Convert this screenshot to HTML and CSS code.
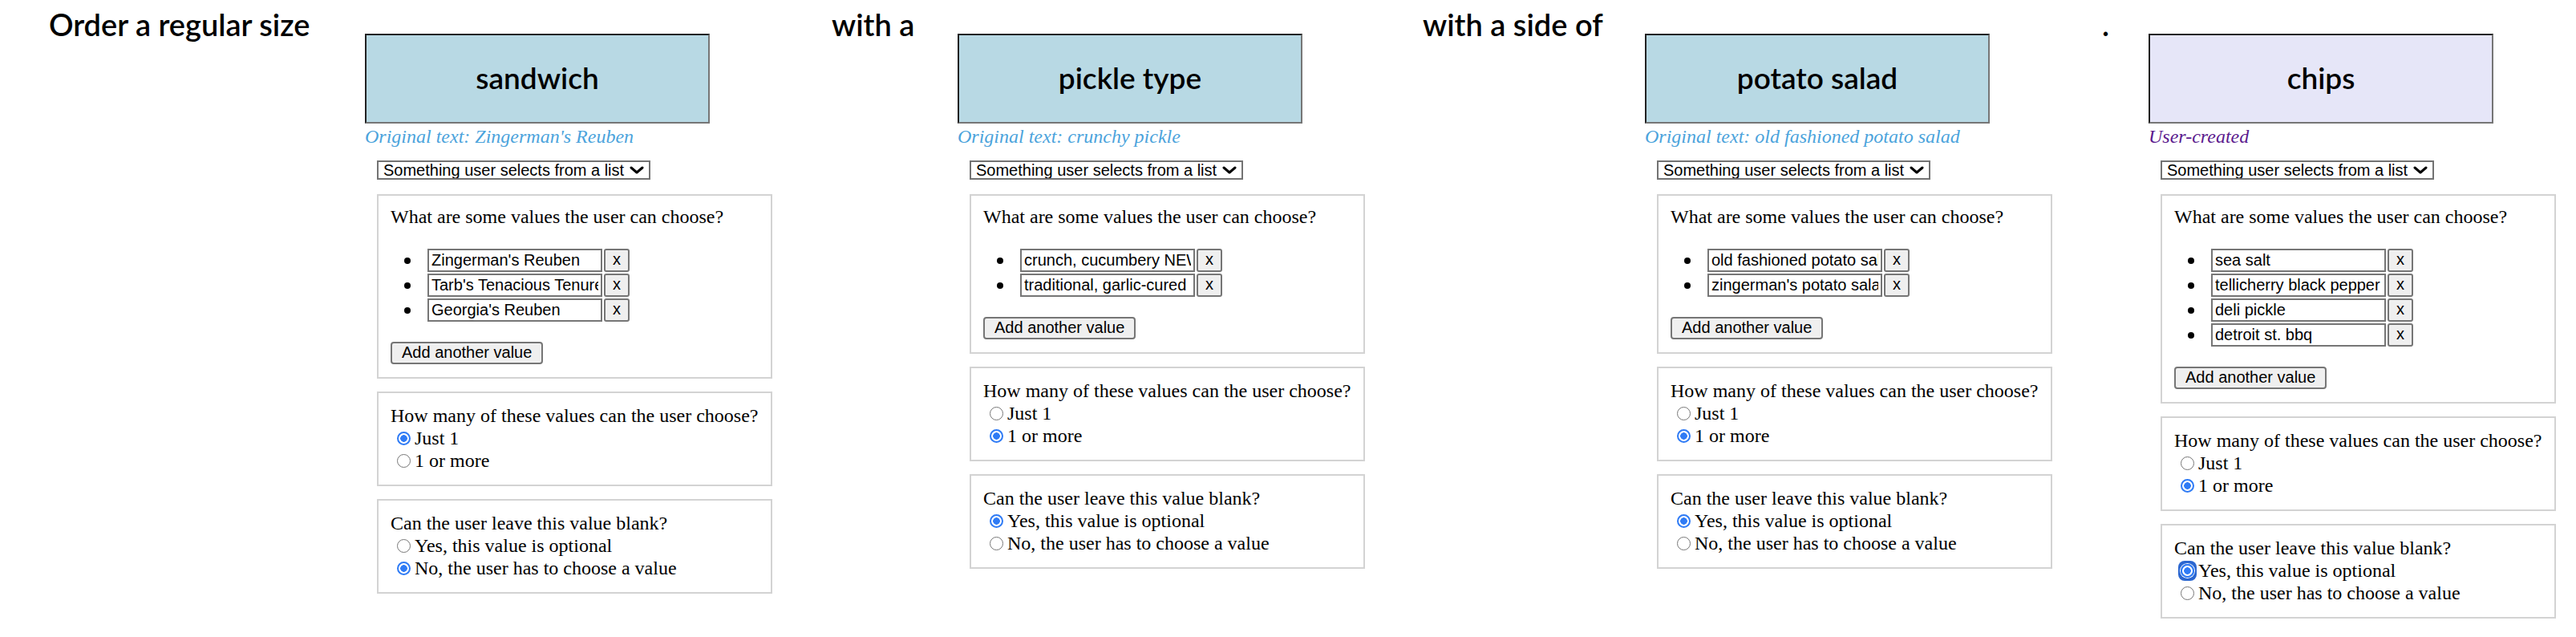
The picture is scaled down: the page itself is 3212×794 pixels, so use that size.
FILE: index.html
```html
<!DOCTYPE html>
<html lang="en">
<head>
<meta charset="utf-8">
<title>Order template</title>
<link rel="stylesheet" href="styles.css">
</head>
<body>
<main class="sentence">
  <div class="phrase">Order a regular size</div>

  <section class="slot">
    <div class="chip chip-original">sandwich</div>
    <div class="origin">Original text: Zingerman's Reuben</div>
    <div class="settings">
      <div class="select-wrap">
        <select class="type-select"><option>Something user selects from a list</option></select>
        <svg class="chev" width="18" height="10" viewBox="0 0 18 10"><polyline points="2,2 9,8 16,2" fill="none" stroke="#000" stroke-width="3" stroke-linecap="round" stroke-linejoin="round"/></svg>
      </div>
      <div class="panel panel-values">
        <p class="q">What are some values the user can choose?</p>
        <ul class="value-list">
          <li><input class="value-input" value="Zingerman's Reuben"><button class="remove">x</button></li>
          <li><input class="value-input" value="Tarb's Tenacious Tenure"><button class="remove">x</button></li>
          <li><input class="value-input" value="Georgia's Reuben"><button class="remove">x</button></li>
        </ul>
        <button class="add">Add another value</button>
      </div>
      <div class="panel">
        <p class="q">How many of these values can the user choose?</p>
        <label class="opt"><input type="radio" name="n1" checked>Just 1</label>
        <label class="opt"><input type="radio" name="n1">1 or more</label>
      </div>
      <div class="panel">
        <p class="q">Can the user leave this value blank?</p>
        <label class="opt"><input type="radio" name="b1">Yes, this value is optional</label>
        <label class="opt"><input type="radio" name="b1" checked>No, the user has to choose a value</label>
      </div>
    </div>
  </section>

  <div class="phrase">with a</div>

  <section class="slot">
    <div class="chip chip-original">pickle type</div>
    <div class="origin">Original text: crunchy pickle</div>
    <div class="settings">
      <div class="select-wrap">
        <select class="type-select"><option>Something user selects from a list</option></select>
        <svg class="chev" width="18" height="10" viewBox="0 0 18 10"><polyline points="2,2 9,8 16,2" fill="none" stroke="#000" stroke-width="3" stroke-linecap="round" stroke-linejoin="round"/></svg>
      </div>
      <div class="panel panel-values">
        <p class="q">What are some values the user can choose?</p>
        <ul class="value-list">
          <li><input class="value-input" value="crunch, cucumbery NEW YORK style"><button class="remove">x</button></li>
          <li><input class="value-input" value="traditional, garlic-cured"><button class="remove">x</button></li>
        </ul>
        <button class="add">Add another value</button>
      </div>
      <div class="panel">
        <p class="q">How many of these values can the user choose?</p>
        <label class="opt"><input type="radio" name="n2">Just 1</label>
        <label class="opt"><input type="radio" name="n2" checked>1 or more</label>
      </div>
      <div class="panel">
        <p class="q">Can the user leave this value blank?</p>
        <label class="opt"><input type="radio" name="b2" checked>Yes, this value is optional</label>
        <label class="opt"><input type="radio" name="b2">No, the user has to choose a value</label>
      </div>
    </div>
  </section>

  <div class="phrase">with a side of</div>

  <section class="slot">
    <div class="chip chip-original">potato salad</div>
    <div class="origin">Original text: old fashioned potato salad</div>
    <div class="settings">
      <div class="select-wrap">
        <select class="type-select"><option>Something user selects from a list</option></select>
        <svg class="chev" width="18" height="10" viewBox="0 0 18 10"><polyline points="2,2 9,8 16,2" fill="none" stroke="#000" stroke-width="3" stroke-linecap="round" stroke-linejoin="round"/></svg>
      </div>
      <div class="panel panel-values">
        <p class="q">What are some values the user can choose?</p>
        <ul class="value-list">
          <li><input class="value-input" value="old fashioned potato salad"><button class="remove">x</button></li>
          <li><input class="value-input" value="zingerman's potato salad"><button class="remove">x</button></li>
        </ul>
        <button class="add">Add another value</button>
      </div>
      <div class="panel">
        <p class="q">How many of these values can the user choose?</p>
        <label class="opt"><input type="radio" name="n3">Just 1</label>
        <label class="opt"><input type="radio" name="n3" checked>1 or more</label>
      </div>
      <div class="panel">
        <p class="q">Can the user leave this value blank?</p>
        <label class="opt"><input type="radio" name="b3" checked>Yes, this value is optional</label>
        <label class="opt"><input type="radio" name="b3">No, the user has to choose a value</label>
      </div>
    </div>
  </section>

  <div class="phrase">.</div>

  <section class="slot">
    <div class="chip chip-user">chips</div>
    <div class="origin origin-user">User-created</div>
    <div class="settings">
      <div class="select-wrap">
        <select class="type-select"><option>Something user selects from a list</option></select>
        <svg class="chev" width="18" height="10" viewBox="0 0 18 10"><polyline points="2,2 9,8 16,2" fill="none" stroke="#000" stroke-width="3" stroke-linecap="round" stroke-linejoin="round"/></svg>
      </div>
      <div class="panel panel-values">
        <p class="q">What are some values the user can choose?</p>
        <ul class="value-list">
          <li><input class="value-input" value="sea salt"><button class="remove">x</button></li>
          <li><input class="value-input" value="tellicherry black pepper"><button class="remove">x</button></li>
          <li><input class="value-input" value="deli pickle"><button class="remove">x</button></li>
          <li><input class="value-input" value="detroit st. bbq"><button class="remove">x</button></li>
        </ul>
        <button class="add">Add another value</button>
      </div>
      <div class="panel">
        <p class="q">How many of these values can the user choose?</p>
        <label class="opt"><input type="radio" name="n4">Just 1</label>
        <label class="opt"><input type="radio" name="n4" checked>1 or more</label>
      </div>
      <div class="panel">
        <p class="q">Can the user leave this value blank?</p>
        <label class="opt"><span class="focus-ring"><input type="radio" name="b4" checked></span>Yes, this value is optional</label>
        <label class="opt"><input type="radio" name="b4">No, the user has to choose a value</label>
      </div>
    </div>
  </section>
</main>
</body>
</html>
```

FILE: styles.css
```css
html, body {
  margin: 0;
  padding: 0;
  background: #fff;
}

body {
  font-family: "Liberation Serif", "Times New Roman", serif;
  color: #000;
}

.sentence {
  display: grid;
  grid-template-columns: 394px 582px 157px 580px 277px 570px 58px auto;
  align-items: start;
  padding-left: 61px;
}

.phrase {
  font-family: Lato, "Noto Sans", sans-serif;
  font-weight: 600;
  font-size: 38px;
  line-height: 44px;
  padding-top: 8px;
  white-space: nowrap;
}

.slot {
  padding-top: 42px;
}

.chip {
  width: 430px;
  height: 112px;
  box-sizing: border-box;
  border: 2px solid;
  border-color: #222 #767676 #767676 #222;
  display: flex;
  align-items: center;
  justify-content: center;
  font-family: Lato, "Noto Sans", sans-serif;
  font-weight: 600;
  font-size: 37px;
  padding-bottom: 4px;
}

.chip-original { background: #b8d9e4; }
.chip-user { background: #e6e6f8; }

.origin {
  font-family: "Liberation Serif", serif;
  font-style: italic;
  font-size: 24px;
  line-height: 28px;
  margin-top: 2px;
  color: #4ba3dc;
  white-space: nowrap;
}

.origin-user { color: #5b1a8e; }

.settings {
  display: flex;
  flex-direction: column;
  width: max-content;
  margin-left: 15px;
  margin-top: 16px;
}

.select-wrap {
  position: relative;
  align-self: flex-start;
  display: flex;
}

.type-select {
  appearance: none;
  -webkit-appearance: none;
  width: 341px;
  height: 24px;
  box-sizing: border-box;
  border: 2px solid #737373;
  border-radius: 0;
  background: #fff;
  font-family: "Liberation Sans", Arial, sans-serif;
  font-size: 20px;
  line-height: 20px;
  padding: 0 0 0 6px;
  margin: 0;
  color: #000;
}

.chev {
  position: absolute;
  right: 8px;
  top: 7px;
  pointer-events: none;
}

.panel {
  border: 2px solid #d3d3d3;
  padding: 15px 15px 16px;
  margin-top: 16px;
}

.panel-values {
  margin-top: 18px;
  padding-top: 13px;
}

.q {
  margin: 0;
  font-size: 24px;
  line-height: 27px;
  white-space: nowrap;
}

.value-list {
  list-style: none;
  margin: 26px 0 0;
  padding: 0;
}

.value-list li {
  display: flex;
  align-items: center;
  height: 29px;
  margin-bottom: 2px;
}

.value-list li::before {
  content: "";
  width: 8px;
  height: 8px;
  border-radius: 50%;
  background: #000;
  margin: 0 21px 0 17px;
}

.value-input {
  width: 218px;
  height: 29px;
  box-sizing: border-box;
  border: 2px solid #767676;
  border-radius: 0;
  padding: 0 3px;
  margin: 0;
  font-family: "Liberation Sans", Arial, sans-serif;
  font-size: 20px;
  color: #000;
  background: #fff;
}

.remove {
  width: 32px;
  height: 29px;
  box-sizing: border-box;
  margin: 0 0 0 2px;
  padding: 0 0 3px;
  border: 2px solid #767676;
  border-radius: 3px;
  background: #efefef;
  font-family: "Liberation Sans", Arial, sans-serif;
  font-size: 20px;
  color: #000;
}

.add {
  display: block;
  height: 28px;
  box-sizing: border-box;
  margin-top: 25px;
  padding: 0 12px 2px;
  border: 2px solid #767676;
  border-radius: 4px;
  background: #efefef;
  font-family: "Liberation Sans", Arial, sans-serif;
  font-size: 20px;
  color: #000;
}

.opt {
  display: flex;
  align-items: center;
  height: 28px;
  font-size: 24px;
  white-space: nowrap;
}

.opt input {
  appearance: none;
  -webkit-appearance: none;
  width: 17px;
  height: 17px;
  box-sizing: border-box;
  margin: 0 5px 0 8px;
  border: 1.5px solid #767676;
  border-radius: 50%;
  background: #fff;
  flex: none;
}

.opt input:checked {
  border: 2px solid #2f7bf5;
  background: radial-gradient(circle, #2f7bf5 0 4px, #fff 4.6px);
}

.focus-ring {
  display: inline-flex;
  padding: 4px 3px;
  margin: 0 2px 0 5px;
  border-radius: 8px;
  background: #2a66d0;
}

.opt .focus-ring input {
  margin: 0;
  box-shadow: 0 0 0 1px #fff;
}
```
